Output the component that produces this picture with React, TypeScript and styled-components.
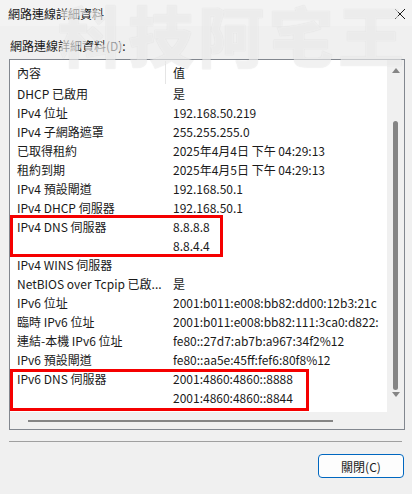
import React from 'react';
import styled, { createGlobalStyle } from 'styled-components';

const GlobalStyle = createGlobalStyle`
  html, body {
    margin: 0;
    padding: 0;
    background: #f0f0f0;
  }
  body {
    font-family: "Noto Sans CJK TC", "Noto Sans", sans-serif;
    font-size: 12px;
    color: #1a1a1a;
  }
`;

const Window = styled.div`
  position: relative;
  width: 412px;
  height: 494px;
  display: flex;
  flex-direction: column;
  background: #f0f0f0;
  overflow: hidden;
`;

const TitleBar = styled.div`
  height: 26px;
  display: flex;
  align-items: center;
  justify-content: space-between;
  padding: 0 6px 0 8px;
  background: #f3f3f3;
  font-size: 12px;
`;

const CloseIcon = styled.svg`
  width: 12px;
  height: 12px;
  margin-top: 1px;
`;

const Body = styled.div`
  display: flex;
  flex-direction: column;
  padding: 11px 8px 0 9px;
`;

const FieldLabel = styled.div`
  height: 22px;
  padding-left: 1px;
  line-height: 18px;
`;

const ListBox = styled.div`
  position: relative;
  width: 396px;
  height: 371px;
  box-sizing: border-box;
  border: 1px solid #82878f;
  display: grid;
  grid-template-columns: 1fr 17px;
  grid-template-rows: 1fr 17px;
  background: #f0f0f0;
`;

const Content = styled.div`
  background: #fff;
  overflow: hidden;
  white-space: nowrap;
`;

const Row = styled.div<{ header?: boolean }>`
  display: flex;
  height: ${p => (p.header ? '24px' : '19px')};
  align-items: center;
  padding-top: ${p => (p.header ? '1px' : '0')};
  box-sizing: border-box;
`;

const NameCell = styled.div<{ header?: boolean }>`
  width: 156px;
  flex-shrink: 0;
  padding-left: 7px;
  box-sizing: border-box;
  overflow: hidden;
  text-overflow: ellipsis;
  align-self: stretch;
  display: flex;
  align-items: center;
  border-right: 1px solid ${p => (p.header ? '#e5e5e5' : 'transparent')};
`;

const ValueCell = styled.div`
  padding-left: 7px;
`;

const VScroll = styled.div`
  display: flex;
  flex-direction: column;
  align-items: center;
`;

const Arrow = styled.div<{ down?: boolean }>`
  width: 0;
  height: 0;
  margin: ${p => (p.down ? '2px 0 0' : '8px 0 0')};
  border-left: 4px solid transparent;
  border-right: 4px solid transparent;
  ${p =>
    p.down
      ? 'border-top: 5px solid #858585;'
      : 'border-bottom: 5px solid #858585;'}
`;

const VThumb = styled.div`
  width: 5px;
  height: 269px;
  margin-top: 48px;
  border-radius: 3px;
  background: #858585;
`;

const HScroll = styled.div`
  display: flex;
  align-items: center;
  padding-left: 18px;
`;

const HThumb = styled.div`
  width: 305px;
  height: 2px;
  background: #858585;
`;

const Highlight = styled.div<{ top: number; width: number }>`
  position: absolute;
  left: 0;
  top: ${p => p.top}px;
  width: ${p => p.width}px;
  height: 42px;
  box-sizing: border-box;
  border: 3px solid #f50000;
  pointer-events: none;
`;

const Separator = styled.div`
  height: 1px;
  width: 393px;
  margin-top: 11px;
  background: #a0a0a0;
`;

const Footer = styled.div`
  display: flex;
  justify-content: flex-end;
  padding: 12px 0 0 0;
`;

const Button = styled.button`
  width: 86px;
  height: 24px;
  border: 1px solid #0067c0;
  border-radius: 4px;
  background: #fdfdfd;
  font-family: inherit;
  font-size: 12px;
  color: #1a1a1a;
  padding: 0;
`;

const Watermark = styled.div`
  position: absolute;
  left: 58px;
  top: 0;
  font-family: "Noto Sans CJK TC", sans-serif;
  font-size: 66px;
  line-height: 1;
  font-weight: 900;
  letter-spacing: 4px;
  color: rgba(255, 255, 255, 0.6);
  text-shadow: 0 0 1px rgba(0, 0, 0, 0.14);
  white-space: nowrap;
  pointer-events: none;
`;

const rows: [string, string][] = [
  ['DHCP 已啟用', '是'],
  ['IPv4 位址', '192.168.50.219'],
  ['IPv4 子網路遮罩', '255.255.255.0'],
  ['已取得租約', '2025年4月4日 下午 04:29:13'],
  ['租約到期', '2025年4月5日 下午 04:29:13'],
  ['IPv4 預設閘道', '192.168.50.1'],
  ['IPv4 DHCP 伺服器', '192.168.50.1'],
  ['IPv4 DNS 伺服器', '8.8.8.8'],
  ['', '8.8.4.4'],
  ['IPv4 WINS 伺服器', ''],
  ['NetBIOS over Tcpip 已啟...', '是'],
  ['IPv6 位址', '2001:b011:e008:bb82:dd00:12b3:21c'],
  ['臨時 IPv6 位址', '2001:b011:e008:bb82:111:3ca0:d822:'],
  ['連結-本機 IPv6 位址', 'fe80::27d7:ab7b:a967:34f2%12'],
  ['IPv6 預設閘道', 'fe80::aa5e:45ff:fef6:80f8%12'],
  ['IPv6 DNS 伺服器', '2001:4860:4860::8888'],
  ['', '2001:4860:4860::8844'],
];

export default function App() {
  return (
    <Window>
      <GlobalStyle />
      <TitleBar>
        <span>網路連線詳細資料</span>
        <CloseIcon viewBox="0 0 12 12">
          <path d="M1 1L11 11M11 1L1 11" stroke="#1a1a1a" strokeWidth="1" fill="none" />
        </CloseIcon>
      </TitleBar>
      <Body>
        <FieldLabel>網路連線詳細資料(D):</FieldLabel>
        <ListBox>
          <Content>
            <Row header>
              <NameCell header>內容</NameCell>
              <ValueCell>值</ValueCell>
            </Row>
            {rows.map(([name, value], i) => (
              <Row key={i}>
                <NameCell>{name}</NameCell>
                <ValueCell>{value}</ValueCell>
              </Row>
            ))}
          </Content>
          <VScroll>
            <Arrow />
            <VThumb />
            <Arrow down />
          </VScroll>
          <HScroll>
            <HThumb />
          </HScroll>
          <div />
          <Highlight top={155} width={213} />
          <Highlight top={309} width={299} />
        </ListBox>
        <Separator />
        <Footer>
          <Button>關閉(C)</Button>
        </Footer>
      </Body>
      <Watermark aria-hidden="true">科技阿宅王</Watermark>
    </Window>
  );
}
